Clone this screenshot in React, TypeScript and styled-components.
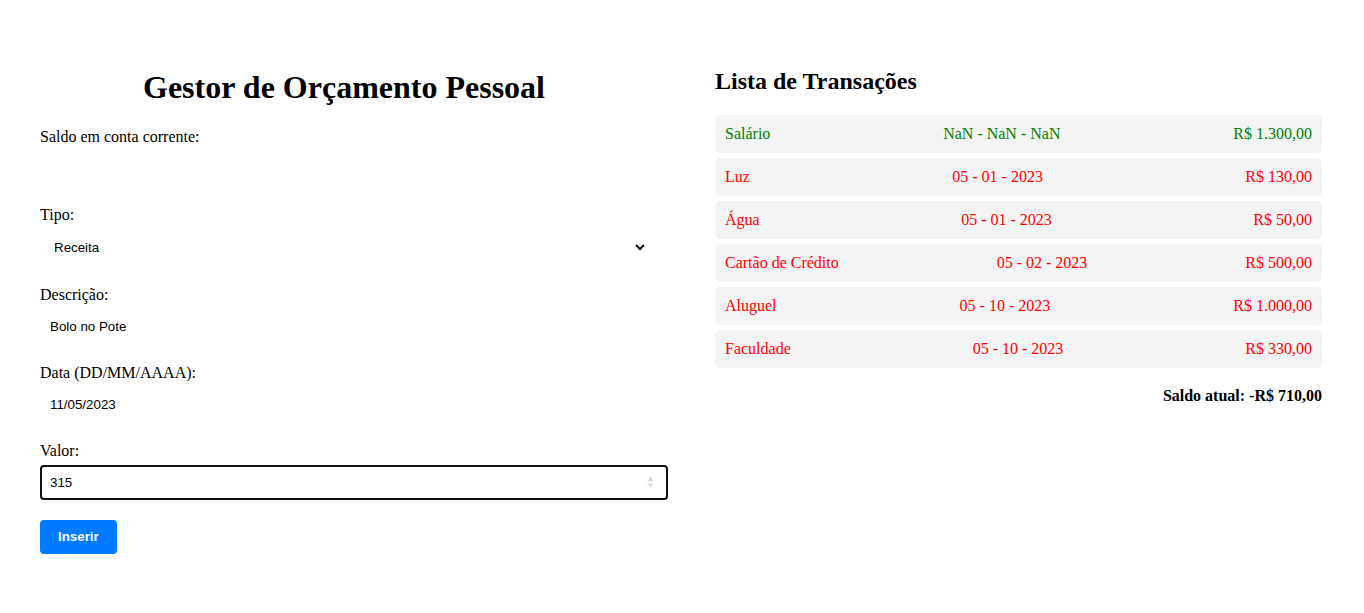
import React from "react";
import styled, { createGlobalStyle } from "styled-components";

const Global = createGlobalStyle`
  html, body { margin: 0; padding: 0; background: #fff; }
  body { font-family: "Liberation Serif", "Times New Roman", serif; font-size: 16px; color: #000; }
`;

const Page = styled.div`
  display: grid;
  grid-template-columns: 608px 607px;
  column-gap: 67px;
  align-items: start;
  padding: 48px 0 0 40px;
`;

const Column = styled.section`
  display: flex;
  flex-direction: column;
`;

const Title = styled.h1`
  font-size: 32px;
  font-weight: bold;
  text-align: center;
  margin: 21.44px 0;
`;

const Balance = styled.p`
  margin: 0 0 60px;
  line-height: 18px;
`;

const Label = styled.label`
  display: block;
  line-height: 18px;
  margin-bottom: 5px;
`;

const Field = styled.div`
  margin-bottom: 20px;
`;

const Select = styled.select`
  display: block;
  width: 608px;
  box-sizing: border-box;
  height: 37px;
  padding: 0 10px;
  border: none;
  background: #fff;
  font-family: "Liberation Sans", Arial, sans-serif;
  font-size: 13.33px;
  color: #000;
`;

const Input = styled.input<{ $focused?: boolean }>`
  display: block;
  width: 628px;
  box-sizing: border-box;
  height: 35px;
  padding: 0 10px;
  border: none;
  border-radius: 4px;
  outline: none;
  background: #fff;
  font-family: "Liberation Sans", Arial, sans-serif;
  font-size: 13.33px;
  color: #000;
  box-shadow: ${(p) => (p.$focused ? "inset 0 0 0 2px #101010" : "none")};

  &::-webkit-inner-spin-button {
    opacity: 0.35;
    transform: scale(0.8);
  }
`;

const Button = styled.button`
  align-self: flex-start;
  height: 34px;
  padding: 0 18px;
  border: none;
  border-radius: 4px;
  background: #007bff;
  color: #fff;
  font-family: "Liberation Sans", Arial, sans-serif;
  font-size: 13.33px;
  font-weight: bold;
`;

const Subtitle = styled.h2`
  font-size: 24px;
  font-weight: bold;
  margin: 19.92px 0;
`;

const List = styled.ul`
  list-style: none;
  margin: 0;
  padding: 0;
  display: flex;
  flex-direction: column;
  gap: 5px;
`;

const Row = styled.li<{ $income: boolean }>`
  display: flex;
  justify-content: space-between;
  padding: 10px;
  line-height: 18px;
  background: #f4f4f4;
  border-radius: 5px;
  color: ${(p) => (p.$income ? "#008000" : "#ff0000")};
`;

const Total = styled.p`
  margin: 19px 0 0;
  text-align: right;
  font-weight: bold;
  line-height: 18px;
`;

const transactions = [
  { desc: "Salário", date: "NaN - NaN - NaN", value: "R$ 1.300,00", income: true },
  { desc: "Luz", date: "05 - 01 - 2023", value: "R$ 130,00", income: false },
  { desc: "Água", date: "05 - 01 - 2023", value: "R$ 50,00", income: false },
  { desc: "Cartão de Crédito", date: "05 - 02 - 2023", value: "R$ 500,00", income: false },
  { desc: "Aluguel", date: "05 - 10 - 2023", value: "R$ 1.000,00", income: false },
  { desc: "Faculdade", date: "05 - 10 - 2023", value: "R$ 330,00", income: false },
];

export default function App() {
  return (
    <>
      <Global />
      <Page>
        <Column>
          <Title>Gestor de Orçamento Pessoal</Title>
          <Balance>Saldo em conta corrente:</Balance>
          <Field>
            <Label>Tipo:</Label>
            <Select defaultValue="receita">
              <option value="receita">Receita</option>
              <option value="despesa">Despesa</option>
            </Select>
          </Field>
          <Field>
            <Label>Descrição:</Label>
            <Input type="text" defaultValue="Bolo no Pote" />
          </Field>
          <Field>
            <Label>Data (DD/MM/AAAA):</Label>
            <Input type="text" defaultValue="11/05/2023" />
          </Field>
          <Field>
            <Label>Valor:</Label>
            <Input type="number" defaultValue="315" $focused />
          </Field>
          <Button>Inserir</Button>
        </Column>
        <Column>
          <Subtitle>Lista de Transações</Subtitle>
          <List>
            {transactions.map((t) => (
              <Row key={t.desc} $income={t.income}>
                <span>{t.desc}</span>
                <span>{t.date}</span>
                <span>{t.value}</span>
              </Row>
            ))}
          </List>
          <Total>Saldo atual: -R$ 710,00</Total>
        </Column>
      </Page>
    </>
  );
}
